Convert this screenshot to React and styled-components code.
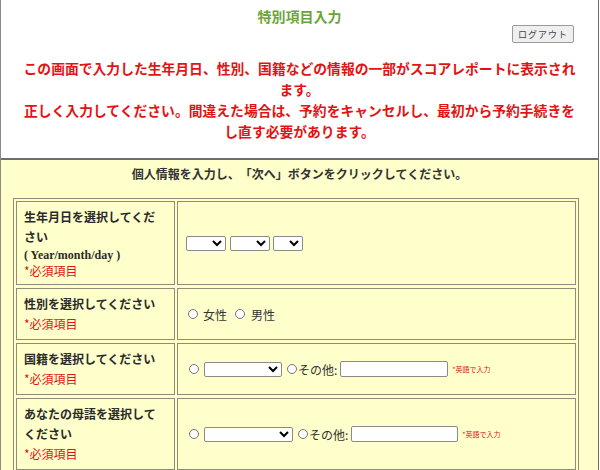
import React from "react";
import styled, { createGlobalStyle } from "styled-components";

const Global = createGlobalStyle`
  html, body { margin: 0; padding: 0; background: #ffffff; }
  body {
    font-family: "Noto Sans CJK JP", "Noto Sans", sans-serif;
    color: #333;
    text-spacing-trim: space-all;
  }
`;

const Frame = styled.div`
  width: 597px;
  border-left: 1px solid #8a8a8a;
  border-right: 1px solid #6a6a6a;
  min-height: 470px;
  background: #ffffcc;
`;

const Header = styled.header`
  background: #ffffff;
  padding: 7px 0 16px;
`;

const Title = styled.h1`
  margin: 0;
  text-align: center;
  font-size: 14px;
  line-height: 18px;
  font-weight: 700;
  color: #6ba539;
`;

const ButtonRow = styled.div`
  display: flex;
  justify-content: flex-end;
  padding-right: 24px;
`;

const LogoutButton = styled.button`
  width: 62px;
  height: 18px;
  padding: 0;
  font-family: "Noto Sans CJK JP", sans-serif;
  font-size: 9px;
  letter-spacing: 1px;
  color: #444;
  background: #efefef;
  border: 1px solid #9a9a9a;
  border-radius: 2px;
`;

const Notice = styled.div`
  margin-top: 15px;
  display: flex;
  flex-direction: column;
  align-items: center;
`;

const NoticeLine = styled.span`
  white-space: nowrap;
  font-size: 13.8px;
  line-height: 21px;
  font-weight: 700;
  color: #e41313;
`;

const Body = styled.section`
  border-top: 2px solid #6e6e6e;
  padding-top: 4px;
`;

const Lead = styled.p`
  margin: 0;
  text-align: center;
  font-size: 12px;
  line-height: 20px;
  font-weight: 700;
  color: #333;
`;

const Form = styled.div`
  display: grid;
  grid-template-columns: 159px 399px;
  column-gap: 2px;
  row-gap: 3px;
  padding: 2px;
  border: 1px solid #8e8e78;
  margin: 14px 0 0 12px;
  width: max-content;
`;

const LabelCell = styled.div`
  border: 1px solid #8e8e78;
  padding: 5px 7px;
`;

const FieldCell = styled.div`
  border: 1px solid #8e8e78;
  padding: 0 8px;
  display: flex;
  align-items: center;
  font-size: 12px;
  color: #333;
`;

const LabelText = styled.div`
  font-size: 12px;
  line-height: 20px;
  font-weight: 700;
  color: #2a2a2a;
`;

const EnglishHint = styled.div`
  font-family: "Liberation Serif", serif;
  font-size: 12px;
  line-height: 16px;
  font-weight: 700;
  color: #2a2a2a;
`;

const Required = styled.div`
  font-size: 12px;
  line-height: ${(p) => p.$lh || 20}px;
  color: #e41313;
`;

const Select = styled.select`
  width: ${(p) => p.$w}px;
  height: ${(p) => p.$h || 15}px;
  margin: 0 ${(p) => p.$mr || 0}px 0 0;
  padding: 0;
  font-size: 9px;
  background: #fff;
  border: 1px solid #8a8a8a;
  border-radius: 2px;
  color: #000;
`;

const Radio = styled.input.attrs({ type: "radio" })`
  width: 10px;
  height: 10px;
  margin: 0 ${(p) => p.$mr ?? 5}px 0 ${(p) => p.$ml ?? 3}px;
`;

const OptionLabel = styled.label`
  display: inline-flex;
  align-items: center;
  margin-right: ${(p) => p.$mr || 0}px;
  font-size: 12px;
  color: #333;
`;

const TextInput = styled.input.attrs({ type: "text" })`
  width: ${(p) => p.$w}px;
  height: 16px;
  box-sizing: border-box;
  margin: 0 4px 0 3px;
  padding: 0 2px;
  border: 1px solid #8a8a8a;
  border-radius: 2px;
  background: #fff;
`;

const Note = styled.span`
  font-size: 7px;
  color: #e41313;
  white-space: nowrap;
`;

function OtherChoice({ selectWidth, inputWidth }) {
  return (
    <>
      <Radio $ml={3} $mr={5} />
      <Select $w={selectWidth} $h={15} $mr={2}>
        <option value=""></option>
      </Select>
      <OptionLabel>
        <Radio $ml={3} $mr={1} />
        その他:
      </OptionLabel>
      <TextInput $w={inputWidth} />
      <Note>*英語で入力</Note>
    </>
  );
}

export default function App() {
  return (
    <>
      <Global />
      <Frame>
        <Header>
          <Title>特別項目入力</Title>
          <ButtonRow>
            <LogoutButton>ログアウト</LogoutButton>
          </ButtonRow>
          <Notice>
            <NoticeLine>この画面で入力した生年月日、性別、国籍などの情報の一部がスコアレポートに表示され</NoticeLine>
            <NoticeLine>ます。</NoticeLine>
            <NoticeLine>正しく入力してください。間違えた場合は、予約をキャンセルし、最初から予約手続きを</NoticeLine>
            <NoticeLine>し直す必要があります。</NoticeLine>
          </Notice>
        </Header>
        <Body>
          <Lead>個人情報を入力し、「次へ」ボタンをクリックしてください。</Lead>
          <Form>
            <LabelCell>
              <LabelText>生年月日を選択してください</LabelText>
              <EnglishHint>( Year/month/day )</EnglishHint>
              <Required $lh={16}>*必須項目</Required>
            </LabelCell>
            <FieldCell>
              <Select $w={40} $mr={4}><option value=""></option></Select>
              <Select $w={40} $mr={3}><option value=""></option></Select>
              <Select $w={30}><option value=""></option></Select>
            </FieldCell>

            <LabelCell>
              <LabelText>性別を選択してください</LabelText>
              <Required>*必須項目</Required>
            </LabelCell>
            <FieldCell>
              <OptionLabel $mr={8}>
                <Radio $ml={2} $mr={5} name="sex" />
                女性
              </OptionLabel>
              <OptionLabel>
                <Radio $ml={0} $mr={6} name="sex" />
                男性
              </OptionLabel>
            </FieldCell>

            <LabelCell>
              <LabelText>国籍を選択してください</LabelText>
              <Required>*必須項目</Required>
            </LabelCell>
            <FieldCell>
              <OtherChoice selectWidth={78} inputWidth={108} />
            </FieldCell>

            <LabelCell>
              <LabelText>あなたの母語を選択してください</LabelText>
              <Required>*必須項目</Required>
            </LabelCell>
            <FieldCell>
              <OtherChoice selectWidth={89} inputWidth={107} />
            </FieldCell>
          </Form>
        </Body>
      </Frame>
    </>
  );
}
